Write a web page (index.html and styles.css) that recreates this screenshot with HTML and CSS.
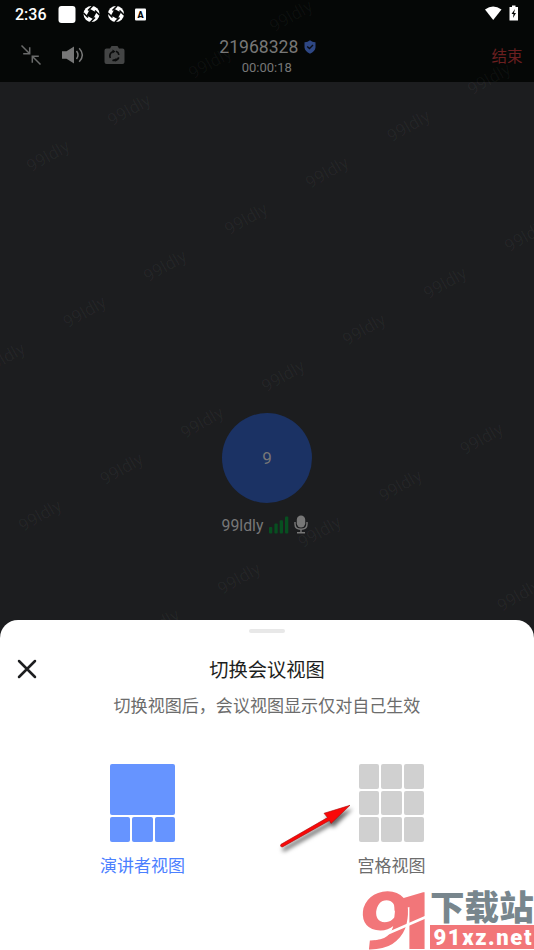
FILE: index.html
```html
<!DOCTYPE html>
<html lang="zh-CN">
<head>
<meta charset="utf-8">
<title>切换会议视图</title>
<link rel="stylesheet" href="styles.css">
</head>
<body>
<div class="screen">
  <header class="top">
    <div class="status">
      <span class="clock">2:36</span>
      <svg class="status-icons" width="90" height="20" viewBox="0 0 90 20">
        <rect x="0.5" y="5" width="17" height="17" rx="3" transform="translate(0 -3)" fill="#fff"/>
        <g id="shutter" transform="translate(33.5 10)">
          <circle r="8" fill="#fff"/>
          <g stroke="#050706" stroke-width="1.6" fill="none">
            <path d="M-3.500 -3.500L1 -8M3.500 -3.500L8 1M3.500 3.500L-1 8M-3.500 3.500L-8 -1"/>
          </g>
          <path d="M-1.500 -5L5 -1.500L1.500 5L-5 1.500Z" fill="#050706"/>
        </g>
        <use href="#shutter" x="24.500"/>
        <rect x="77" y="4.500" width="11" height="12" rx="1" fill="#fff"/>
        <text x="82.500" y="14" text-anchor="middle" class="badge-letter">A</text>
      </svg>
      <svg class="signal" width="36" height="20" viewBox="0 0 36 20">
        <path d="M1 4.500Q9 -1.500 17.500 4.500L9.200 15Z" fill="#fff"/>
        <path d="M25.500 2H28V.5H31.500V2H34V15.500H25.500Z" fill="#fff"/>
        <path d="M31 4L27.500 9H29.500L29 13L32 8H30Z" fill="#050706"/>
      </svg>
    </div>
    <div class="bar">
      <div class="tools">
        <svg width="22" height="22" viewBox="0 0 22 22" fill="none" stroke="#6a6b6b" stroke-width="1.500">
          <path d="M1.500 1.500L9.500 9.500M9.700 3.200V9.700H3.200M20.500 20.500L12.500 12.500M12.300 18.800V12.300H18.800"/>
        </svg>
        <svg width="24" height="20" viewBox="0 0 24 20">
          <path d="M1 6.200H5.500L13 1.500V18.500L5.500 13.800H1Z" fill="#777"/>
          <path d="M15.500 6Q18.500 10 15.500 14M18.200 3.200Q24.500 10 18.200 16.800" fill="none" stroke="#777" stroke-width="1.500"/>
        </svg>
        <svg width="21" height="20" viewBox="0 0 21 20">
          <path d="M2.500 3.500H6L7.500 1H13.500L15 3.500H18.500Q20.500 3.500 20.500 5.500V17Q20.500 19 18.500 19H2.500Q.5 19 .5 17V5.500Q.5 3.500 2.500 3.500Z" fill="#444545"/>
          <path d="M6.300 13A4.700 4.700 0 0 1 9 6.500M12 6.300A4.700 4.700 0 0 1 14.900 9.800M14.800 12.400A4.700 4.700 0 0 1 8.500 15.100" fill="none" stroke="#0b0c0c" stroke-width="1.700"/>
          <path d="M8.500 4.500L11.500 6.500L8.500 8.500ZM12.500 13L12 16.500L9 15Z" fill="#0b0c0c"/>
        </svg>
      </div>
      <div class="meeting">
        <div class="number">21968328
          <svg width="12" height="14" viewBox="0 0 12 14"><path d="M6 .3Q8.500 2.300 11.500 2.200V7.500Q11 11.500 6 13.700Q1 11.500 .5 7.500V2.200Q3.500 2.300 6 .3Z" fill="#2e4784"/><path d="M3.200 6.400L5.500 8.500L9 5" fill="none" stroke="#0a0d14" stroke-width="1.400"/></svg>
        </div>
        <div class="time">00:00:18</div>
      </div>
      <div class="end">结束</div>
    </div>
  </header>
  <main class="stage">
    <div class="avatar">9</div>
    <div class="person">
      <span>99ldly</span>
      <svg width="20" height="18" viewBox="0 0 20 18" fill="#074f20">
        <rect x="0" y="11" width="3.300" height="6.500" rx="1"/><rect x="5.400" y="7.500" width="3.300" height="10" rx="1"/><rect x="10.700" y="4.200" width="3.300" height="13.300" rx="1"/><rect x="16" y=".5" width="3.300" height="17" rx="1"/>
      </svg>
      <svg class="mic" width="14" height="19" viewBox="0 0 14 19">
        <rect x="2.800" y=".5" width="8.400" height="12" rx="4.200" fill="#777"/>
        <path d="M1 7V9Q1 14.200 7 14.200Q13 14.200 13 9V7M7 14V17.500M3 17.700H11" fill="none" stroke="#777" stroke-width="1.400"/>
      </svg>
    </div>
  </main>
  <svg class="watermark" width="534" height="640" viewBox="0 0 534 640">
    <g transform="translate(291 15) rotate(-30)"><text>99ldly</text></g>
    <g transform="translate(210 62) rotate(-30)"><text>99ldly</text></g>
    <g transform="translate(129 109) rotate(-30)"><text>99ldly</text></g>
    <g transform="translate(48 155) rotate(-30)"><text>99ldly</text></g>
    <g transform="translate(489 78) rotate(-30)"><text>99ldly</text></g>
    <g transform="translate(408.500 125) rotate(-30)"><text>99ldly</text></g>
    <g transform="translate(327 171.500) rotate(-30)"><text>99ldly</text></g>
    <g transform="translate(246 218) rotate(-30)"><text>99ldly</text></g>
    <g transform="translate(165 265) rotate(-30)"><text>99ldly</text></g>
    <g transform="translate(84.500 311) rotate(-30)"><text>99ldly</text></g>
    <g transform="translate(3.500 357.500) rotate(-30)"><text>99ldly</text></g>
    <g transform="translate(526 235) rotate(-30)"><text>99ldly</text></g>
    <g transform="translate(445 282) rotate(-30)"><text>99ldly</text></g>
    <g transform="translate(364 328.500) rotate(-30)"><text>99ldly</text></g>
    <g transform="translate(283 375) rotate(-30)"><text>99ldly</text></g>
    <g transform="translate(202 421.500) rotate(-30)"><text>99ldly</text></g>
    <g transform="translate(121.500 468) rotate(-30)"><text>99ldly</text></g>
    <g transform="translate(40 514.500) rotate(-30)"><text>99ldly</text></g>
    <g transform="translate(481.500 438) rotate(-30)"><text>99ldly</text></g>
    <g transform="translate(400.500 484.500) rotate(-30)"><text>99ldly</text></g>
    <g transform="translate(319.500 531) rotate(-30)"><text>99ldly</text></g>
    <g transform="translate(239 577.500) rotate(-30)"><text>99ldly</text></g>
    <g transform="translate(158 624) rotate(-30)"><text>99ldly</text></g>
    <g transform="translate(518.500 594.500) rotate(-30)"><text>99ldly</text></g>
  </svg>
  <section class="sheet">
    <div class="handle"></div>
    <div class="sheet-head">
      <svg class="close" width="20" height="20" viewBox="0 0 20 20"><path d="M2 2L18 18M18 2L2 18" stroke="#1d1e20" stroke-width="2.500" stroke-linecap="round"/></svg>
      <h1>切换会议视图</h1>
    </div>
    <p class="hint">切换视图后，会议视图显示仅对自己生效</p>
    <div class="options">
      <div class="option selected">
        <div class="tiles"><i class="wide"></i><i></i><i></i><i></i></div>
        <span>演讲者视图</span>
      </div>
      <div class="option">
        <div class="tiles"><i></i><i></i><i></i><i></i><i></i><i></i><i></i><i></i><i></i></div>
        <span>宫格视图</span>
      </div>
    </div>
  </section>
  <svg class="arrow" width="90" height="60" viewBox="0 0 90 60">
    <path d="M7 44.300L53.500 17.600L50 13.300L76 5.300L57 23.500L55.500 20.500L8.500 46.900Q5.500 46.800 7 44.300Z" fill="#f90808" stroke="#a80b0b" stroke-width=".6"/>
  </svg>
  <div class="site">
    <svg width="66" height="62" viewBox="0 0 66 62">
      <text class="mark nine" transform="translate(-9 61) skewX(-6) scale(1.180 1)">9</text>
      <text class="mark" transform="translate(23 61) scale(1.150 1)">1</text>
      <path d="M11 51L63 28.500" stroke="#fff" stroke-width="2.500"/>
    </svg>
    <div class="site-text">
      <div class="site-name">下载站</div>
      <div class="site-url"><svg width="104" height="24" viewBox="0 0 104 24"><text x="3.500" y="20" textLength="98" lengthAdjust="spacing">91xz.net</text></svg></div>
    </div>
  </div>
</div>
</body>
</html>
```
FILE: styles.css
```css
* { box-sizing: border-box; }
body { margin: 0; font-family: Roboto, "Noto Sans CJK SC", sans-serif; }
svg { display: block; flex: none; }
.screen { position: relative; width: 534px; height: 950px; overflow: hidden; background: #1c1d1f; display: flex; flex-direction: column; }
.top { height: 82px; background: #050706; flex: none; }
.status { height: 28px; padding: 0 14px 0 15px; display: flex; align-items: center; color: #fff; }
.clock { font-size: 16px; font-weight: 500; width: 43px; }
.status-icons { margin-top: -1px; }
.badge-letter { font-size: 9px; font-weight: 900; fill: #050706; }
.signal { margin-left: auto; margin-top: 2px; }
.bar { height: 54px; display: grid; grid-template-columns: 1fr 97px 1fr; align-items: center; padding: 0 11.500px 0 20px; }
.tools { display: flex; align-items: center; gap: 19px; }
.meeting { color: #777; padding-top: 4px; margin-left: -3.500px; }
.number { font-size: 17.600px; line-height: 21px; display: flex; gap: 6px; align-items: center; }
.number svg { margin-top: -2px; }
.time { font-size: 13px; line-height: 19px; padding-left: 22.500px; }
.end { color: #6b1f20; font-size: 15.500px; text-align: right; }
.stage { height: 538px; padding-top: 331px; display: flex; flex-direction: column; align-items: center; flex: none; }
.avatar { width: 90px; height: 90px; border-radius: 50%; background: #1b3264; color: #777; font-size: 17px; display: flex; align-items: center; justify-content: center; flex: none; }
.person { margin-top: 12px; height: 20px; display: flex; align-items: center; color: #777; font-size: 15.800px; gap: 5.500px; margin-right: 4px; }
.mic { margin-top: -1px; }
.watermark { position: absolute; left: 0; top: 1px; }
.watermark text { font-size: 17.500px; fill: #fff; fill-opacity: .04; text-anchor: middle; dominant-baseline: central; }
.sheet { position: relative; flex: 1; background: #fff; border-radius: 18px 18px 0 0; padding-top: 9px; }
.handle { width: 36px; height: 4px; border-radius: 2px; background: #e8e8e8; margin: 0 auto; }
.sheet-head { height: 28px; margin-top: 22px; display: grid; grid-template-columns: 40px 1fr 40px; align-items: center; padding: 0 17px; }
.close { margin-top: -3px; }
h1 { margin: 2px 0 0; font-size: 19.300px; line-height: 28px; font-weight: 400; color: #1d1e20; text-align: center; }
.hint { margin: 11px 0 0; font-size: 17.060px; line-height: 24px; color: #6c6c6c; text-align: center; }
.options { margin-top: 46px; padding: 0 18px; display: flex; }
.option { flex: 1; display: flex; flex-direction: column; align-items: center; color: #6c6c6c; font-size: 17px; line-height: 24px; }
.option span { margin-top: 12px; }
.tiles { width: 65px; height: 78px; display: grid; grid-template-columns: repeat(3, 1fr); grid-template-rows: repeat(3, 1fr); gap: 2px; }
.tiles i { background: #d0d0d0; border-radius: 2px; }
.selected { color: #4b80ff; }
.selected .tiles i { background: #6694ff; }
.tiles .wide { grid-column: span 3; grid-row: span 2; }
.arrow { position: absolute; left: 274px; top: 800px; filter: drop-shadow(2px 4px 2px rgba(0,0,0,.6)); }
.site { position: absolute; left: 364px; top: 888px; display: flex; width: 170px; height: 62px; }
.site > svg { overflow: visible; }
.mark { font: 900 80px Roboto, sans-serif; fill: #f27679; }
.nine { font-weight: 700; }
.site-text { width: 104px; padding-top: 2px; }
.site-name { height: 35px; line-height: 37px; font-size: 34.600px; font-weight: 900; color: #78868d; white-space: nowrap; }
.site-url { height: 24px; background: #f27679; }
.site-url text { font: 900 22px Roboto, sans-serif; fill: #fff; }
```
